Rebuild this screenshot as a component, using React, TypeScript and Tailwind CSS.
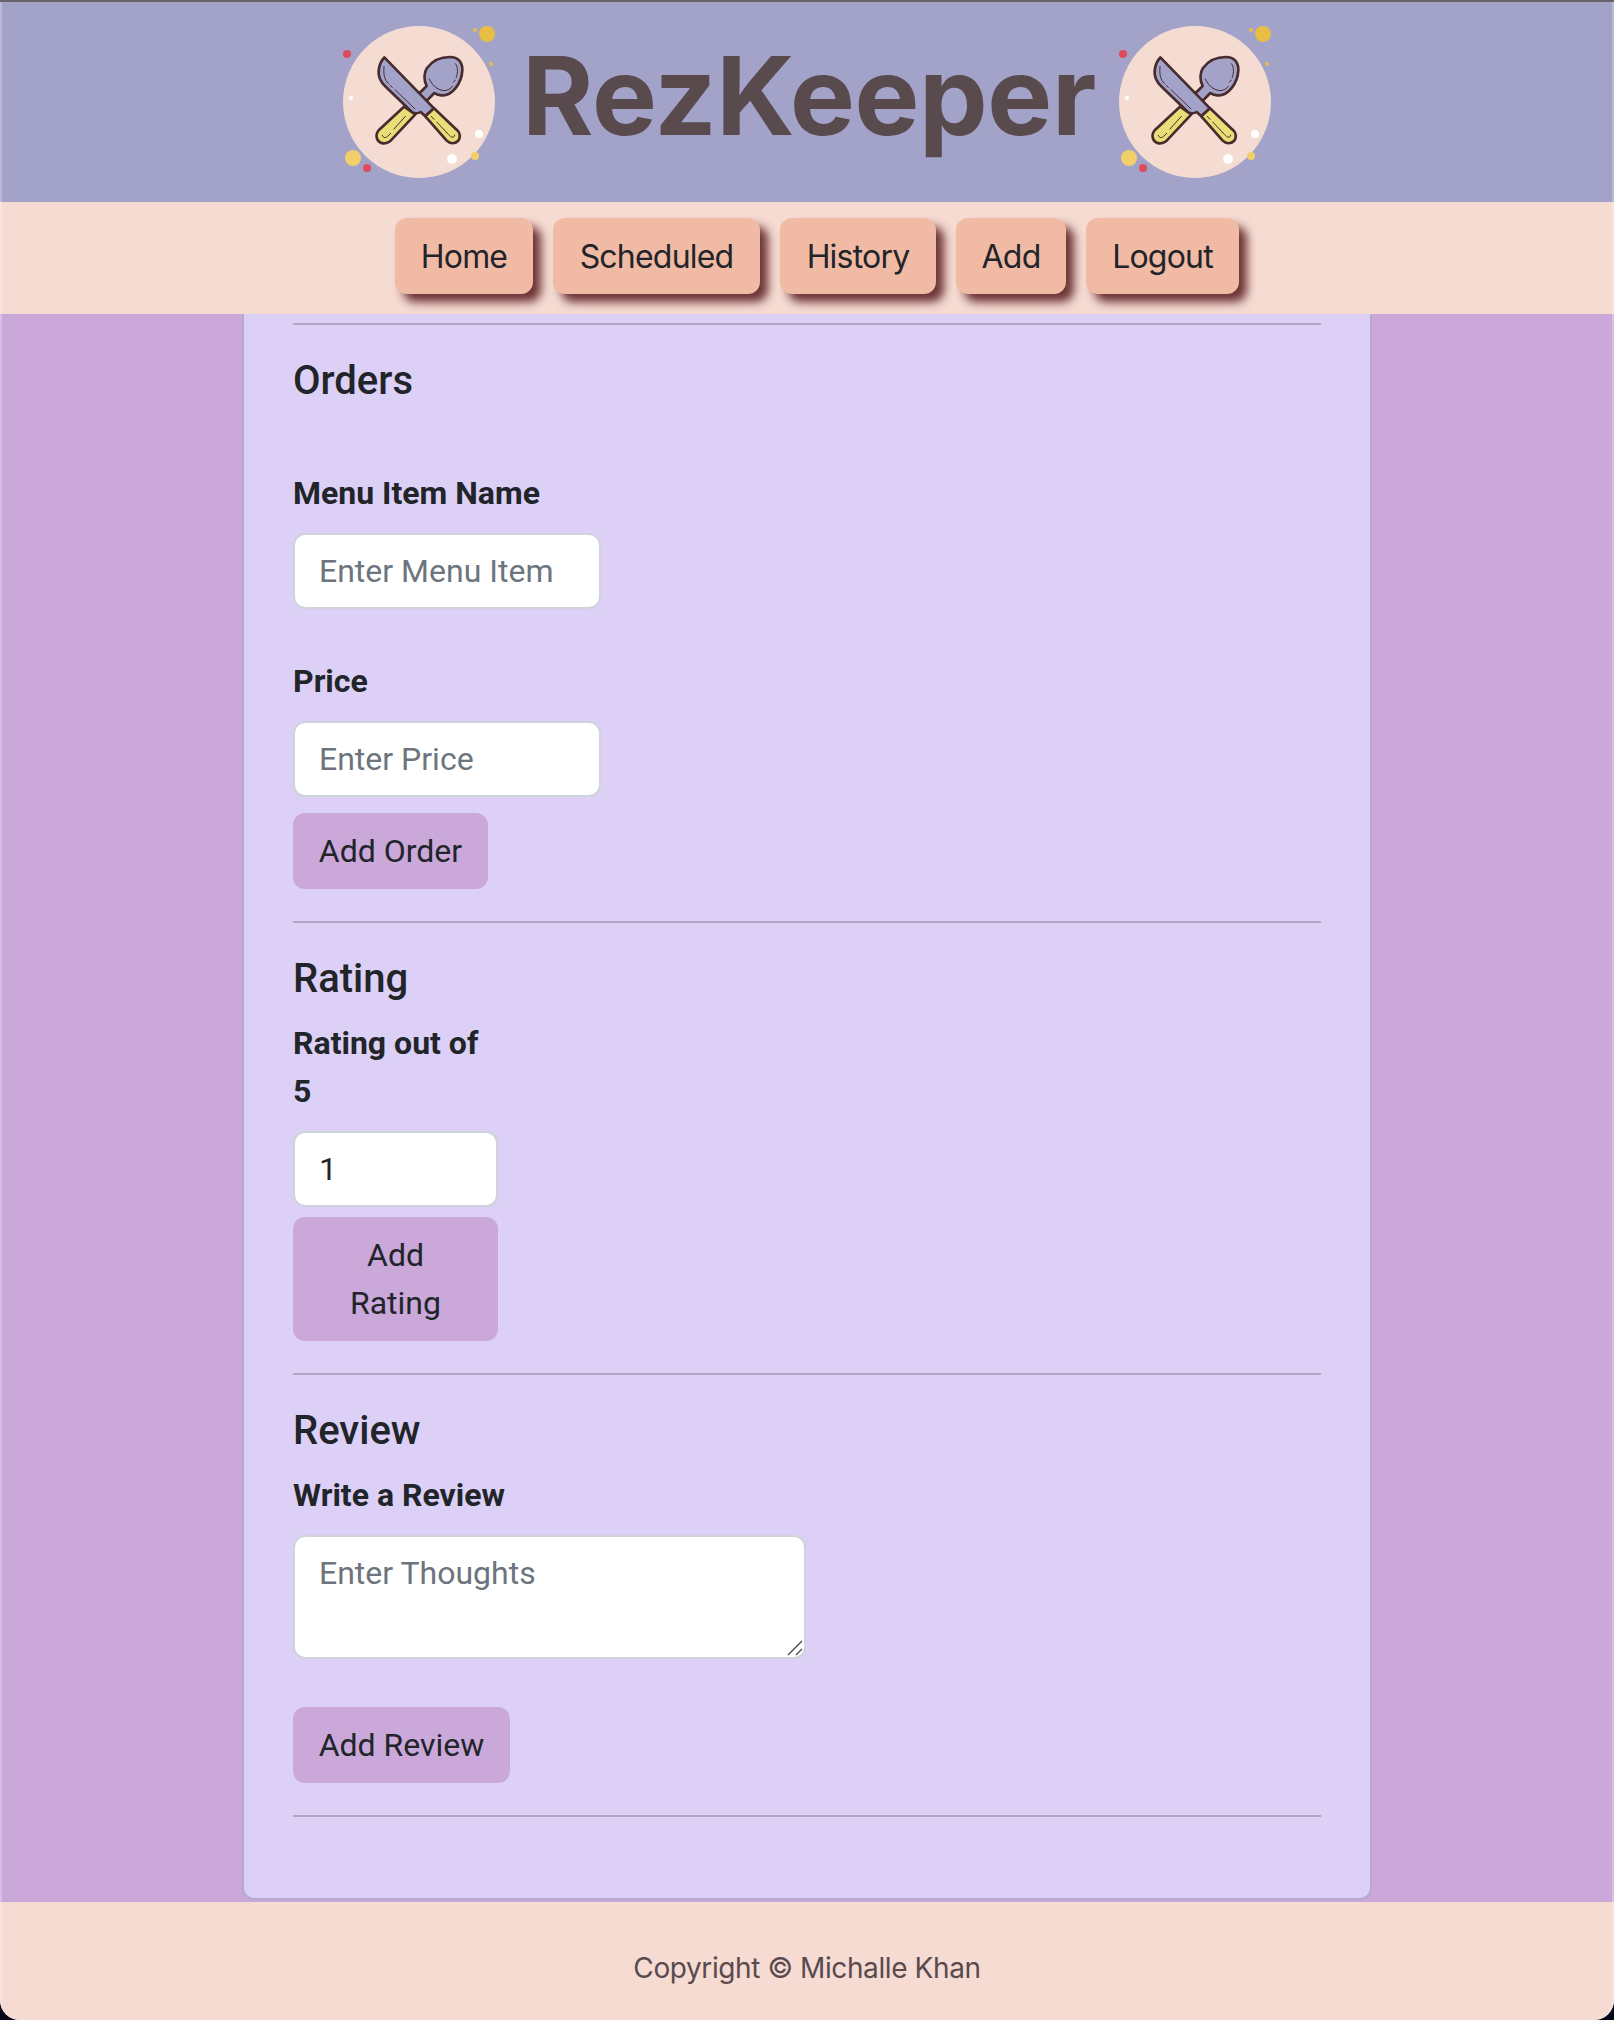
import React from "react";

function Utensils() {
  return (
    <svg viewBox="30 66 480 480" className="h-40 w-40 shrink-0" fill="none" aria-hidden="true">
      <circle cx="267" cy="306" r="228" fill="#f5dcd3" />
      <circle cx="51" cy="162" r="12" fill="#de4c5a" />
      <circle cx="111" cy="504" r="12" fill="#de4c5a" />
      <circle cx="471" cy="102" r="24" fill="#e8bd43" />
      <circle cx="435" cy="90" r="6" fill="#e8bd43" />
      <circle cx="483" cy="192" r="6" fill="#e8bd43" />
      <circle cx="69" cy="474" r="24" fill="#f3cf6c" />
      <circle cx="435" cy="468" r="12" fill="#f3cf6c" />
      <circle cx="63" cy="294" r="6" fill="#fff" />
      <circle cx="447" cy="402" r="12" fill="#fff" />
      <circle cx="366" cy="477" r="15" fill="#fff" />
      <g stroke="#472b2d" strokeWidth="8" strokeLinejoin="round">
        <path
          fill="#a3a2c9"
          d="M290 258C281 240 281 218 291 204C308 181 336 171 360 171C384 171 398 187 397 211C395 250 366 289 334 286C325 285 318 283 313 279L253 340L230 318Z"
        />
        <path fill="#eadd78" d="M222 320L146 391C138 399 138 412 143 420C151 433 169 433 180 424L256 343Z" />
        <path
          fill="#a3a2c9"
          d="M163 172C146 190 142 218 150 237C154 247 160 254 167 260L245 335C252 341 265 341 272 336L286 349L312 325Z"
        />
        <path fill="#eadd78" d="M286 349L350 422C360 432 375 432 384 423C392 414 391 400 383 392L312 325Z" />
      </g>
      <g stroke="#472b2d" strokeWidth="3" strokeLinecap="round">
        <path d="M162 200C160 225 163 238 175 250M180 256L187 262M195 269L255 327" />
        <path d="M298 237C308 261 331 275 349 271C357 269 364 264 367 259M371 246L376 240M379 232C384 216 384 200 376 191" />
        <path d="M226 349L192 387M182 400L172 410C166 415 158 413 157 406" />
        <path d="M304 349L312 358M320 366L356 404C362 412 374 416 374 405" />
      </g>
    </svg>
  );
}

const navItems = [
  { label: "Home", width: "w-[138px]" },
  { label: "Scheduled", width: "w-[207px]" },
  { label: "History", width: "w-[156px]" },
  { label: "Add", width: "w-[110px]" },
  { label: "Logout", width: "w-[153px]" },
];

const field =
  "block h-[76px] rounded-xl border-2 border-[#ced4da] bg-white px-6 text-[#212529] placeholder:text-[#6c757d] placeholder:opacity-100 outline-none";
const button = "block rounded-xl bg-[#cba8da] py-3.5 text-center";

function Rule() {
  return <hr className="my-8 h-0.5 border-0 bg-[#b0a5c8]" />;
}

function Heading({ children }: { children: React.ReactNode }) {
  return <h2 className="mb-4 text-[40px] leading-[48px] font-medium">{children}</h2>;
}

export default function App() {
  return (
    <div className="h-[2020px] w-[1614px] overflow-hidden bg-[#06061a]">
      <div className="relative flex h-full flex-col overflow-hidden rounded-b-[20px] bg-[#cba8da] font-[Roboto,sans-serif] text-[32px] leading-[48px] text-[#212529]">
        <header className="flex h-[202px] shrink-0 justify-center border-t-2 border-[#666469] bg-[#a3a2c9] pt-5 pl-0.5">
          <div className="flex w-[936px] justify-between">
            <Utensils />
            <h1 className="ml-0.5 pt-px font-[Inter,sans-serif] text-[109px] leading-[144px] font-bold tracking-[-0.4px] text-[#594a4e]">
              RezKeeper
            </h1>
            <Utensils />
          </div>
        </header>
        <nav className="relative z-10 flex h-28 shrink-0 justify-center gap-5 bg-[#f5dbd2] pt-4 pl-[20px] font-[Inter,sans-serif] tracking-[-0.8px]">
          {navItems.map((item) => (
            <a
              key={item.label}
              className={`${item.width} h-[76px] rounded-xl bg-[#f1baa5] pt-[15px] text-center shadow-[8px_8px_10px_#6b3335]`}
            >
              {item.label}
            </a>
          ))}
        </nav>
        <main className="flex h-[1588px] shrink-0 items-start justify-center">
          <section className="h-[1586px] w-[1130px] rounded-b-xl border-x-2 border-b-2 border-[#b5a9cf] bg-[#dcd0f7] px-[49px] pt-[9px]">
            <hr className="mb-8 h-0.5 border-0 bg-[#b0a5c8]" />
            <Heading>Orders</Heading>
            <label className="mt-16 mb-4 block font-bold">Menu Item Name</label>
            <input className={`${field} w-[308px]`} placeholder="Enter Menu Item" />
            <label className="mt-12 mb-4 block font-bold">Price</label>
            <input className={`${field} w-[308px]`} placeholder="Enter Price" />
            <button className={`${button} mt-4 w-[195px]`}>Add Order</button>
            <Rule />
            <Heading>Rating</Heading>
            <div className="w-[205px]">
              <label className="mb-4 block font-bold">Rating out of 5</label>
              <input className={`${field} w-full`} defaultValue="1" />
              <button className={`${button} mt-2.5 w-full px-[26px]`}>
                Add
                <br />
                Rating
              </button>
            </div>
            <Rule />
            <Heading>Review</Heading>
            <label className="mb-4 block font-bold">Write a Review</label>
            <div className="relative w-[513px]">
              <textarea
                className="block h-[124px] w-full resize-none rounded-xl border-2 border-[#ced4da] bg-white px-6 py-3 outline-none placeholder:text-[#6c757d] placeholder:opacity-100"
                placeholder="Enter Thoughts"
              />
              <svg className="absolute right-[3px] bottom-[3px] h-4 w-4" viewBox="0 0 16 16" stroke="#4a4a4a" strokeWidth="1.4">
                <path d="M1 15L15 1M9 15L15 9" />
              </svg>
            </div>
            <button className={`${button} mt-12 w-[217px]`}>Add Review</button>
            <Rule />
          </section>
        </main>
        <footer className="h-[118px] shrink-0 bg-[#f5dbd2] pt-[42px] text-center font-[Inter,sans-serif] text-[28px] tracking-[-0.4px] text-[#594a4e]">
          Copyright © Michalle Khan
        </footer>
        <div className="pointer-events-none absolute inset-x-0 top-0.5 bottom-0 z-20 rounded-b-[20px] border-x-2 border-white/25" />
      </div>
    </div>
  );
}
